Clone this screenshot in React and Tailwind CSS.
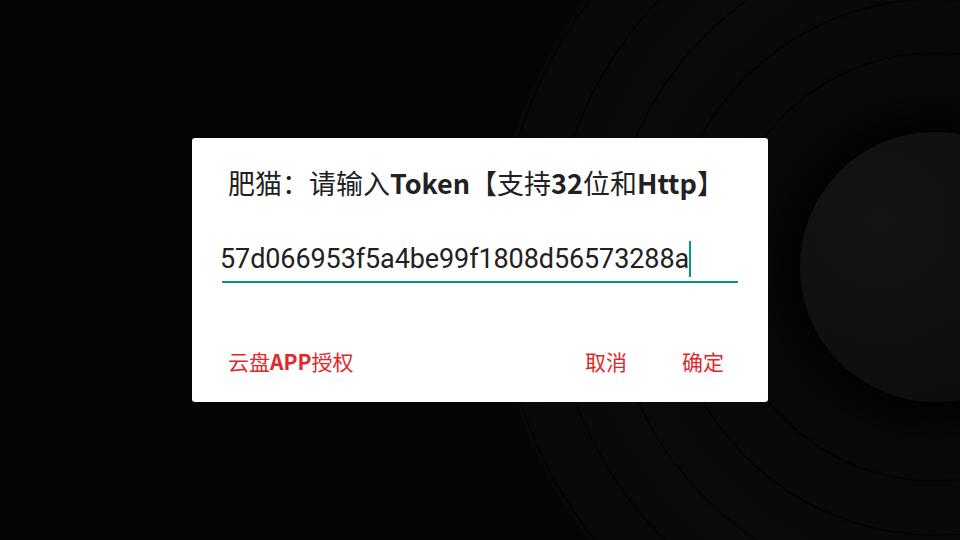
import React from 'react';

// 背景：黑胶唱片
function RecordBackdrop() {
    const grooves = [436, 384, 326, 268, 214];
    return (
        <svg className="absolute inset-0" width="960" height="540" viewBox="0 0 960 540">
            <defs>
                <radialGradient id="disc" cx="935" cy="267" r="440" gradientUnits="userSpaceOnUse">
                    <stop offset="0.3" stopColor="#070707" />
                    <stop offset="0.75" stopColor="#0a0a0a" />
                    <stop offset="1" stopColor="#080808" />
                </radialGradient>
                <radialGradient id="label" cx="880" cy="220" r="220" gradientUnits="userSpaceOnUse">
                    <stop offset="0" stopColor="#141414" />
                    <stop offset="1" stopColor="#0c0c0c" />
                </radialGradient>
                <radialGradient id="ring" cx="935" cy="267" r="175" gradientUnits="userSpaceOnUse">
                    <stop offset="0.75" stopColor="#020202" />
                    <stop offset="1" stopColor="#020202" stopOpacity="0" />
                </radialGradient>
            </defs>
            <rect width="960" height="540" fill="#050505" />
            <circle cx="935" cy="267" r="440" fill="url(#disc)" />
            {grooves.map(r => (
                <circle key={r} cx="935" cy="267" r={r} fill="none" stroke="#000" strokeWidth="2" opacity="0.6" />
            ))}
            <circle cx="935" cy="267" r="175" fill="url(#ring)" />
            <circle cx="935" cy="267" r="135" fill="url(#label)" />
        </svg>
    );
}

const cjk = { fontFamily: '"Noto Sans CJK SC", "Noto Sans", sans-serif' };

export default function App() {
    return (
        <div className="relative w-[960px] h-[540px] overflow-hidden bg-black flex items-center justify-center">
            <RecordBackdrop />

            {/* 对话框 */}
            <div className="relative w-[576px] h-[264px] bg-white rounded-[3px] flex flex-col">
                <h2
                    className="pt-[27px] pl-[36px] text-[27px] leading-[36px] font-normal text-[#212121] whitespace-nowrap"
                    style={cjk}
                >
                    肥猫：请输入<span className="font-bold">Token</span>【支持<span className="font-bold">32</span>位和<span className="font-bold">Http</span>】
                </h2>

                <div className="mt-[40px] mx-[30px] pb-[4px] border-b-2 border-[#009688] flex items-start">
                    <span
                        className="-ml-[2px] text-[27px] leading-[36px] text-[#212121] whitespace-nowrap tracking-[-0.1px]"
                        style={{ fontFamily: 'Roboto, "Liberation Sans", sans-serif' }}
                    >
                        57d066953f5a4be99f1808d56573288a
                    </span>
                    <span className="w-[2px] h-[36px] bg-[#009688]" />
                </div>

                <div
                    className="mt-auto mb-[27px] pl-[36px] pr-[44px] flex items-center text-[21px] leading-[28px] text-[#e0282d]"
                    style={cjk}
                >
                    <button className="whitespace-nowrap">云盘<span className="font-bold">APP</span>授权</button>
                    <div className="ml-auto flex items-center gap-[55px]">
                        <button>取消</button>
                        <button>确定</button>
                    </div>
                </div>
            </div>
        </div>
    );
}
